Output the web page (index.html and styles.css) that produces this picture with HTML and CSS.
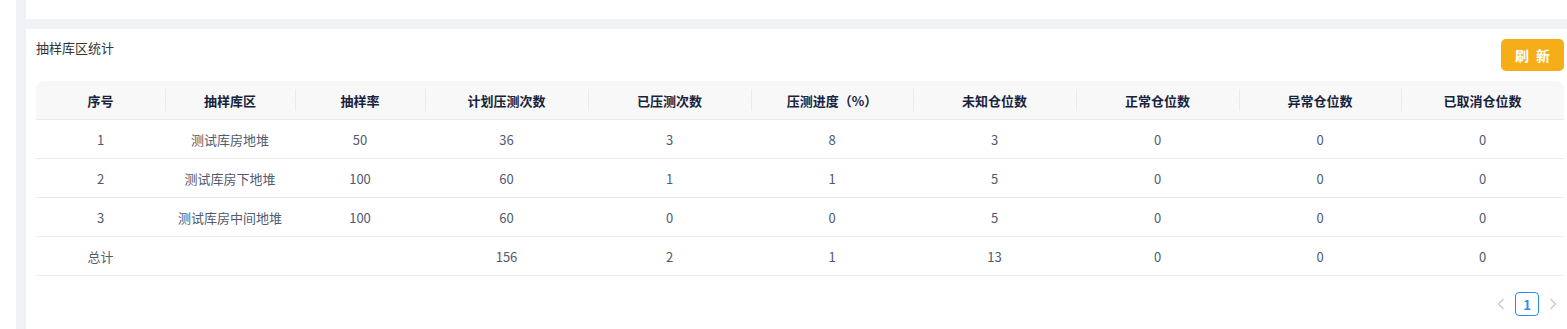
FILE: index.html
```html
<!DOCTYPE html>
<html lang="zh-CN">
<head>
<meta charset="utf-8">
<link rel="stylesheet" href="styles.css">
</head>
<body>
<div class="layout">
  <div class="panel panel-top"></div>
  <div class="panel panel-main">
    <div class="panel-head">
      <div class="title">抽样库区统计</div>
      <button class="btn-refresh">刷 新</button>
    </div>
    <table class="stat-table">
      <colgroup>
        <col style="width:129px"><col style="width:130px"><col style="width:130px">
        <col style="width:163px"><col style="width:163px"><col style="width:162px">
        <col style="width:163px"><col style="width:163px"><col style="width:162px"><col style="width:163px">
      </colgroup>
      <thead>
        <tr>
          <th>序号</th><th>抽样库区</th><th>抽样率</th><th>计划压测次数</th><th>已压测次数</th>
          <th>压测进度（%）</th><th>未知仓位数</th><th>正常仓位数</th><th>异常仓位数</th><th>已取消仓位数</th>
        </tr>
      </thead>
      <tbody>
        <tr><td>1</td><td>测试库房地堆</td><td>50</td><td>36</td><td>3</td><td>8</td><td>3</td><td>0</td><td>0</td><td>0</td></tr>
        <tr><td>2</td><td>测试库房下地堆</td><td>100</td><td>60</td><td>1</td><td>1</td><td>5</td><td>0</td><td>0</td><td>0</td></tr>
        <tr><td>3</td><td>测试库房中间地堆</td><td>100</td><td>60</td><td>0</td><td>0</td><td>5</td><td>0</td><td>0</td><td>0</td></tr>
        <tr><td>总计</td><td></td><td></td><td>156</td><td>2</td><td>1</td><td>13</td><td>0</td><td>0</td><td>0</td></tr>
      </tbody>
    </table>
    <div class="pager">
      <span class="pg-arrow">
        <svg width="8" height="12" viewBox="0 0 8 12"><path d="M6.5 1 L1.5 6 L6.5 11" fill="none" stroke="#c5c8ce" stroke-width="1.3"/></svg>
      </span>
      <span class="pg-item">1</span>
      <span class="pg-arrow">
        <svg width="8" height="12" viewBox="0 0 8 12"><path d="M1.5 1 L6.5 6 L1.5 11" fill="none" stroke="#c5c8ce" stroke-width="1.3"/></svg>
      </span>
    </div>
  </div>
</div>
</body>
</html>
```

FILE: styles.css
```css
html, body {
  margin: 0;
  padding: 0;
  background: #fff;
  font-family: "Noto Sans CJK SC", "Microsoft YaHei", "Liberation Sans", sans-serif;
  font-size: 13px;
  color: #515a6e;
}

.layout {
  margin-left: 16px;
  background: #f0f2f5;
  padding-left: 10px;
  min-height: 329px;
  display: flex;
  flex-direction: column;
  gap: 10px;
}

.panel {
  background: #fff;
}

.panel-top {
  height: 19px;
}

.panel-main {
  flex: 1;
  padding: 10px 3px 0 10px;
}

.panel-head {
  display: flex;
  justify-content: space-between;
  align-items: flex-start;
  height: 42px;
}

.title {
  font-size: 13px;
  color: #333;
  line-height: 18px;
}

.btn-refresh {
  width: 63px;
  height: 32px;
  border: none;
  border-radius: 5px;
  background: #f5ae17;
  color: #fff;
  font-family: inherit;
  font-size: 14px;
  font-weight: bold;
  letter-spacing: 2px;
  padding: 0 0 0 2px;
  white-space: pre;
  cursor: pointer;
}

.stat-table {
  width: 1528px;
  table-layout: fixed;
  border-collapse: separate;
  border-spacing: 0;
}

.stat-table th {
  position: relative;
  height: 38px;
  background: #f8f8f9;
  font-weight: bold;
  color: #17233d;
  font-size: 13px;
  text-align: center;
  padding: 0;
  border-bottom: 1px solid #ebebeb;
}

.stat-table th:first-child {
  border-top-left-radius: 8px;
}

.stat-table th:last-child {
  border-top-right-radius: 8px;
}

.stat-table th + th::before {
  content: "";
  position: absolute;
  left: 0;
  top: 8px;
  bottom: 8px;
  width: 1px;
  background: #ebebeb;
}

.stat-table td {
  height: 38px;
  padding: 0;
  text-align: center;
  color: #515a6e;
  border-bottom: 1px solid #ebebeb;
}

.pager {
  display: flex;
  justify-content: flex-end;
  align-items: center;
  gap: 10px;
  margin-top: 16px;
  padding-right: 7px;
}

.pg-arrow {
  width: 8px;
  height: 24px;
  display: flex;
  align-items: center;
  justify-content: center;
}

.pg-item {
  box-sizing: border-box;
  width: 24px;
  height: 24px;
  border: 1px solid #2d8cf0;
  border-radius: 4px;
  color: #2d8cf0;
  font-weight: bold;
  font-size: 13px;
  display: flex;
  align-items: center;
  justify-content: center;
}
```
